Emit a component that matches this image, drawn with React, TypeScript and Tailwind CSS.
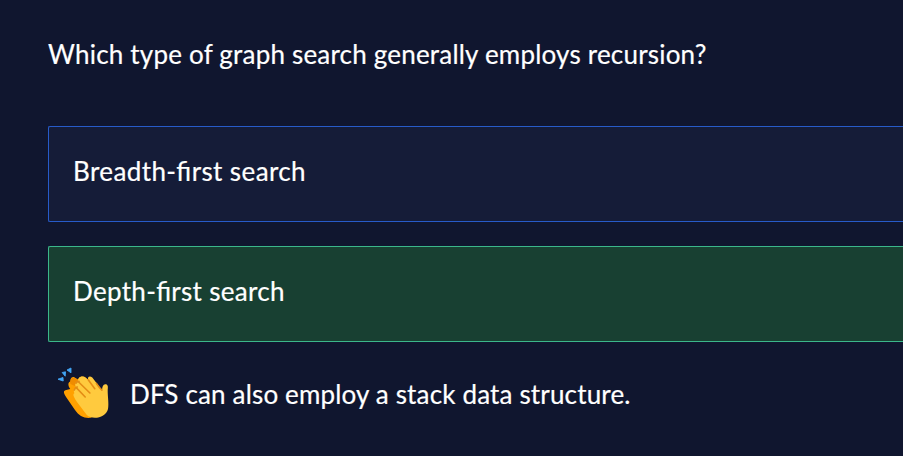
import React from 'react';

function ClappingHands() {
  return (
    <svg viewBox="0 0 66 66" className="h-[66px] w-[66px] shrink-0" aria-label="Clapping hands">
      <path d="M8 19.2 13 17.5 13.2 21ZM12.2 12.5 15.5 11.8 15.2 16.2ZM17 10 21 8V12.8Z" fill="#42a5f5" stroke="#42a5f5" strokeWidth="0.9" strokeLinejoin="round" />
      <path d="M15.4 30.2C12.5 31 14.4 34.4 16.4 37.4L25 50C29 56 34 58.5 41 57.8L52 48 48 28 35 17C31 15.5 29.4 17 28 19.4L24.2 17.3C21.4 16.3 20 19 20.7 21.5 17.4 22 18.1 26 20.2 29Z" fill="#ffa000" />
      <path d="M20.5 24C19.2 19.8 21.6 17.3 24.5 17.8 26.5 18.3 27.5 20.5 29 22.5L27 27Z" fill="#ef8c00" />
      <path d="M24.4 33.3C22 34 24.5 38.5 27 42L36.8 55C43 60.5 56 57.5 58 49 59.1 44 57.6 36.5 57.7 29.8 58.2 26.3 57.8 24 55.2 24.2 53 24.4 52.3 26.5 52 30.3L42.3 17.5C39.5 15 36.9 17.2 38.4 20L34.2 16.8C30.5 15.5 27.5 18 28.1 21.4 25.2 21.8 24.4 24.5 26.2 27.4 24 28.3 23.2 30.5 24.4 33.3Z" fill="#ffca3e" />
      <g fill="none" stroke="#e48c15" strokeWidth="1.6" strokeLinecap="round">
        <path d="M26 27.4 35.2 37M28.1 21.5 39.9 33M38.4 20 44.8 28.7M51.9 30.2C49.6 28.2 48 25.7 46.4 23.4" />
        <path d="M24.3 30C24.8 28.3 25.5 27.3 27.3 27M26 23.2C26.5 21.9 27.5 21.4 29 21.4" />
      </g>
    </svg>
  );
}

function Answer({ label, correct = false }: { label: string; correct?: boolean }) {
  return (
    <div className={`flex h-24 w-full items-center rounded-l-[2px] border border-r-0 pl-[24px] pb-[6px] ${correct ? 'border-[#3bb78b] bg-[#184032] tracking-[0.32px]' : 'border-[#275bc9] bg-[#151c38] tracking-[0.4px]'}`}>
      <span>{label}</span>
    </div>
  );
}

export default function App() {
  return (
    <main className="h-[456px] w-full overflow-hidden bg-[#10162f] pl-12 pt-[38px] font-[Lato,sans-serif] text-[26px] leading-8 text-white [font-feature-settings:'liga'_1] [-webkit-text-stroke:0.2px_white]">
      <h1 className="h-[88px] whitespace-nowrap tracking-[0.2px]"><span>Which type of graph search generally employs recursion?</span></h1>
      <div className="flex flex-col gap-6">
        <Answer label="Breadth-first search" />
        <Answer label="Depth-first search" correct />
      </div>
      <div className="mt-[18px] flex whitespace-nowrap">
        <div className="ml-[2px]"><ClappingHands /></div>
        <p className="ml-[14px] mt-[18px] tracking-[0.16px]"><span>DFS can also employ a stack data structure.</span></p>
      </div>
    </main>
  );
}
